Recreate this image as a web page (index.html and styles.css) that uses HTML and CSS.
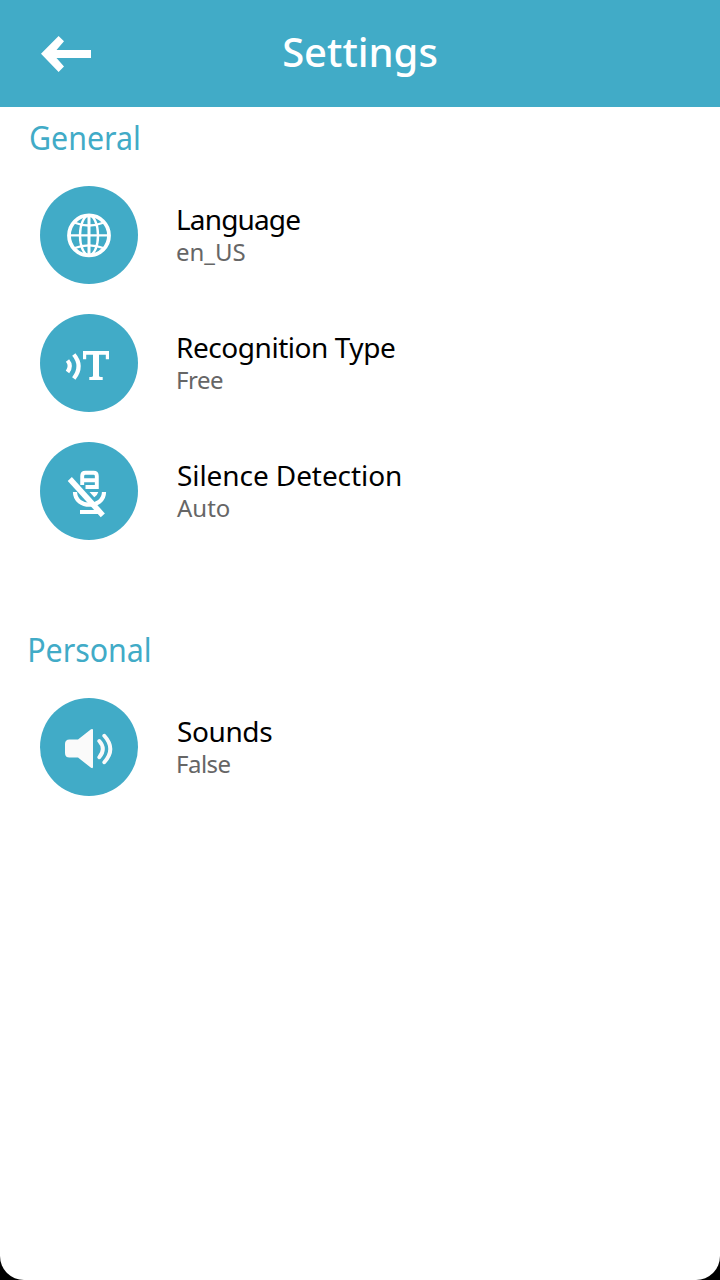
FILE: index.html
```html
<!DOCTYPE html>
<html lang="en">
<head>
<meta charset="utf-8">
<title>Settings</title>
<link rel="stylesheet" href="styles.css">
</head>
<body>
<div class="screen">
  <header class="topbar">
    <svg class="back" viewBox="0 0 52 38" aria-label="Back"><path d="M51 15H16.500L24 6.200 18.600 1 1 18.800 18.600 37 24 31.400 16.500 23H51V15Z"/></svg>
    <h1 class="title">Settings</h1>
  </header>
  <main>
    <section class="group">
      <h2 class="heading heading-general">General</h2>
      <div class="row">
        <svg class="icon" viewBox="0 0 98 98">
          <g class="line">
            <circle cx="49" cy="49.400" r="20" stroke-width="3.800"/>
            <ellipse cx="49" cy="49.400" rx="9" ry="20" stroke-width="2.400"/>
            <path d="M49 29v41" stroke-width="3"/>
            <path d="M29 49.400h40M34 36.500Q49 42.500 64 36.500M34 62.300Q49 56.300 64 62.300" stroke-width="2.300"/>
          </g>
        </svg>
        <div class="labels">
          <div class="name name-language">Language</div>
          <div class="value value-language">en_US</div>
        </div>
      </div>
      <div class="row">
        <svg class="icon" viewBox="0 0 98 98">
          <path class="line" d="M27.500 46.500q4.500 5.300 0 11.500M33.800 40.500q9.600 11.500 0 24" stroke-width="4.200"/>
          <path class="solid" d="M43 37h26v8.200h-3.200v-4.500H59V61.500c0 1.300.6 1.500 3.700 1.500V66H49.300v-3c3.100 0 3.700-.2 3.700-1.500V40.700h-6.800v4.500H43Z"/>
        </svg>
        <div class="labels">
          <div class="name name-recognition">Recognition Type</div>
          <div class="value value-recognition">Free</div>
        </div>
      </div>
      <div class="row">
        <svg class="icon" viewBox="0 0 98 98">
          <g class="line">
            <path d="M42.200 43V34q0-3.200 3.200-3.200h8.200Q56.800 30.800 56.800 34V45H45.500M42.200 38.300H57" stroke-width="3.900"/>
            <path d="M35 50C35 67 64 67 64 50" stroke-width="4.200"/>
            <path d="M40 70H59" stroke-width="3.800"/>
          </g>
          <path class="solid" d="M49.500 50h8.800q-1 3.500-4 5.300Z"/>
          <path class="line" d="M29.800 37 62.800 73.300" stroke-width="5.600"/>
        </svg>
        <div class="labels">
          <div class="name name-silence">Silence Detection</div>
          <div class="value value-silence">Auto</div>
        </div>
      </div>
    </section>
    <section class="group">
      <h2 class="heading heading-personal">Personal</h2>
      <div class="row">
        <svg class="icon" viewBox="0 0 98 98">
          <path class="speaker" d="M29.500 41.500H38L51 31.300q2-1 2 .8V69q0 1.800-2 .8L38 59.500H29.500Q25 59.500 25 55V46Q25 41.500 29.500 41.500Z"/>
          <path class="line wave" d="M59.300 43q7 7.800 0 16.200M64.300 37.800q12 13.200 0 26.400" stroke-width="3.900"/>
        </svg>
        <div class="labels">
          <div class="name name-sounds">Sounds</div>
          <div class="value value-sounds">False</div>
        </div>
      </div>
    </section>
  </main>
</div>
</body>
</html>
```
FILE: styles.css
```css
* {
  box-sizing: border-box;
}

body {
  margin: 0;
  background: #000;
  font-family: "Noto Sans", sans-serif;
}

.screen {
  height: 1280px;
  overflow: hidden;
  background: #fff;
  border-radius: 0 0 24px 24px;
}

.topbar {
  display: grid;
  grid-template-columns: 92px 1fr 92px;
  height: 107px;
  background: #41abc7;
}

.back {
  width: 52px;
  height: 38px;
  margin: 35px 0 0 40px;
  fill: #fff;
}

.title {
  margin: 0;
  color: #fff;
  font-size: 40px;
  font-weight: 500;
  line-height: 104px;
  text-align: center;
}

.group {
  height: 512px;
}

.heading {
  height: 64px;
  margin: 0;
  color: #41abc7;
  font-size: 33px;
  font-weight: 400;
  line-height: 62px;
  transform: scaleX(0.92);
  transform-origin: left;
}

.heading-general {
  padding-left: 31.5px;
}

.heading-personal {
  padding-left: 29.5px;
}

.row {
  display: flex;
  gap: 38px;
  height: 128px;
  padding: 15px 0 0 40px;
}

.icon {
  width: 98px;
  height: 98px;
  border-radius: 50%;
  background: #41abc7;
}

.line {
  fill: none;
  stroke: #fff;
}

.solid {
  fill: #fff;
}

.speaker {
  fill: #fafafa;
}

.wave {
  stroke: #fafafa;
  stroke-linecap: round;
}

.labels {
  padding-top: 16px;
  white-space: nowrap;
}

.name {
  color: #000;
  font-size: 28px;
  line-height: 34px;
}

.value {
  color: #666;
  font-size: 24px;
  line-height: 32px;
}

.name-language {
  letter-spacing: -0.85px;
}

.name-recognition {
  letter-spacing: -0.45px;
}

.name-silence,
.name-sounds,
.value-silence {
  padding-left: 1px;
}

.name-silence {
  letter-spacing: -0.08px;
}

.name-sounds {
  letter-spacing: -0.4px;
}

.value-recognition,
.value-sounds {
  letter-spacing: -0.5px;
}
```
